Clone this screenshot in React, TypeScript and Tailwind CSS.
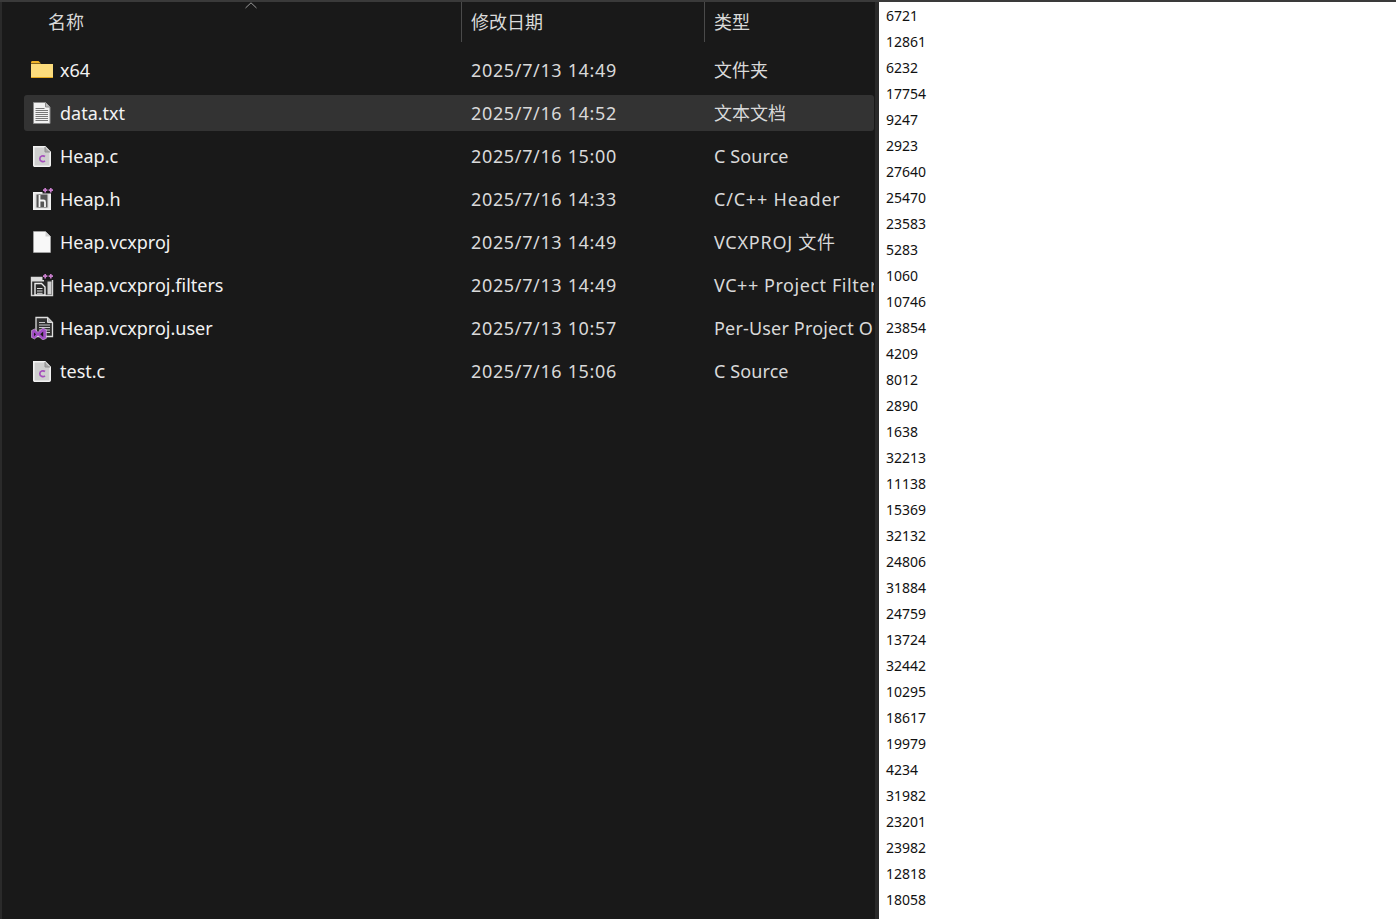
import React from "react";

const files = [
  { name: "x64", date: "2025/7/13 14:49", type: "文件夹", icon: "folder", typeClass: "" },
  { name: "data.txt", date: "2025/7/16 14:52", type: "文本文档", icon: "txt", selected: true, typeClass: "" },
  { name: "Heap.c", date: "2025/7/16 15:00", type: "C Source", icon: "c", typeClass: "tracking-[0.1px]" },
  { name: "Heap.h", date: "2025/7/16 14:33", type: "C/C++ Header", icon: "h", typeClass: "tracking-[0.8px]" },
  { name: "Heap.vcxproj", date: "2025/7/13 14:49", type: "VCXPROJ 文件", icon: "blank", typeClass: "tracking-[0.75px]" },
  { name: "Heap.vcxproj.filters", date: "2025/7/13 14:49", type: "VC++ Project Filter", icon: "filters", typeClass: "tracking-[0.55px]" },
  { name: "Heap.vcxproj.user", date: "2025/7/13 10:57", type: "Per-User Project O", icon: "user", typeClass: "tracking-[0.17px]" },
  { name: "test.c", date: "2025/7/16 15:06", type: "C Source", icon: "c", typeClass: "tracking-[0.1px]" },
];

const numbers = [
  6721, 12861, 6232, 17754, 9247, 2923, 27640, 25470, 23583, 5283, 1060, 10746, 23854, 4209, 8012, 2890, 1638,
  32213, 11138, 15369, 32132, 24806, 31884, 24759, 13724, 32442, 10295, 18617, 19979, 4234, 31982, 23201, 23982,
  12818, 18058,
];

function FileIcon({ kind }: { kind: string }) {
  if (kind === "folder") {
    return (
      <svg width="24" height="20" viewBox="0 0 24 20">
        <path d="M1 2.5C1 1.7 1.6 1 2.4 1H8.5L11 3.5H1Z" fill="#f0b429" />
        <path d="M1 4H23V18H1Z" fill="#fcdc7c" />
        <path d="M1 17H23V18H1Z" fill="#e3a81f" />
      </svg>
    );
  }
  if (kind === "txt") {
    return (
      <svg width="24" height="24" viewBox="0 0 24 24">
        <path d="M3.5 1.5H15.5L20 6V22.5H3.5Z" fill="#f2f2f2" stroke="#8c8c8c" />
        <path d="M15.5 1.5V6H20" fill="#bdbdbd" stroke="#8c8c8c" />
        <path d="M5.5 7.5H14.5M5.5 9.5H18M5.5 11.5H18M5.5 13.5H18M5.5 15.5H18M5.5 17.5H18M5.5 19.5H18" stroke="#777" strokeWidth="1" />
      </svg>
    );
  }
  if (kind === "c") {
    return (
      <svg width="24" height="24" viewBox="0 0 24 24">
        <path d="M3.8 2.8H15L20.2 8V21.2C20.2 21.8 19.8 22.2 19.2 22.2H4.8C4.2 22.2 3.8 21.8 3.8 21.2Z" fill="#cfcfcf" stroke="#f2f2f2" strokeWidth="1.6" />
        <path d="M15 3V8H20" fill="#a8a8a8" stroke="#8e8e8e" strokeWidth="1" />
        <path d="M15 12.5C13.3 11.2 9.8 11.7 9.8 14.7S13.3 18.2 15 16.9" fill="none" stroke="#a54fbc" strokeWidth="1.7" />
      </svg>
    );
  }
  if (kind === "h") {
    return (
      <svg width="24" height="24" viewBox="0 0 24 24">
        <path d="M3.8 5.8H20.2V22.2H3.8Z" fill="#dedede" stroke="#f2f2f2" strokeWidth="1.6" />
        <path d="M6.5 7.5H17.5V20.5H6.5Z" fill="#555555" />
        <path d="M9.5 8V20M9.5 13.5H13.5C14.5 13.5 15 14.2 15 15V20" fill="none" stroke="#f5f5f5" strokeWidth="1.8" />
        <path d="M12.5 0H24V6.5H12.5Z" fill="#191919" />
        <path d="M13 3.2H17.4M15.2 1V5.4M18.6 3.2H23M20.8 1V5.4" stroke="#c77dcb" strokeWidth="1.7" />
      </svg>
    );
  }
  if (kind === "blank") {
    return (
      <svg width="24" height="24" viewBox="0 0 24 24">
        <path d="M3.5 1.5H15.5L20.5 6.5V22.5H3.5Z" fill="#f8f8f8" stroke="#b0b0b0" strokeWidth="0.6" />
        <path d="M15.5 1.5V6.5H20.5Z" fill="#cfcfcf" />
      </svg>
    );
  }
  if (kind === "filters") {
    return (
      <svg width="24" height="24" viewBox="0 0 24 24">
        <path d="M1.5 4.5H22.5V22.5H1.5Z" fill="#2a2a2a" stroke="#d6d6d6" strokeWidth="1.4" />
        <path d="M1.5 4.5H14V8.5H1.5Z" fill="#dcdcdc" />
        <path d="M5 10.5H11.5L15 14V22H5Z" fill="#2a2a2a" stroke="#ededed" strokeWidth="1.4" />
        <path d="M7 15.5H12.5M7 18H12.5M7 20.3H12.5" stroke="#e0e0e0" />
        <path d="M17.5 8.5H21.5V21.5H17.5Z" fill="#d0d0d0" />
        <path d="M12.5 0H24V7H12.5Z" fill="#191919" />
        <path d="M13 3.2H17.4M15.2 1V5.4M18.6 3.2H23M20.8 1V5.4" stroke="#c77dcb" strokeWidth="1.7" />
      </svg>
    );
  }
  if (kind === "user") {
    return (
      <svg width="24" height="24" viewBox="0 0 24 24">
        <path d="M6 1.5H17.5L22.5 6.5V20.5H6Z" fill="#303030" stroke="#dedede" strokeWidth="1.3" />
        <path d="M17.5 1.5V6.5H22.5" fill="#b8b8b8" stroke="#dedede" />
        <path d="M9 6.5H15M9 9H20M9 11.5H20M9 14H20M9 16.5H20" stroke="#c8c8c8" />
        <path d="M1.5 14.5L4.6 13L8 16.3L12.8 12L16.4 13.7V22.3L12.8 24L8 19.7L4.6 23L1.5 21.5Z" fill="#a04dc4" stroke="#ecdcf3" strokeWidth="0.5" />
        <path d="M4 16.4V20.2L6 18.3ZM13.2 15.6L10.2 18.3L13.2 21Z" fill="#191919" />
      </svg>
    );
  }
  return null;
}

export default function App() {
  return (
    <div className="flex flex-col w-[1396px] h-[919px] overflow-hidden bg-[#191919] font-['Noto_Sans','Noto_Sans_CJK_SC',sans-serif]">
      <div className="h-[2px] shrink-0 bg-[#3a3a3a]" />
      <div className="flex flex-1 min-h-0">
        <div className="w-[875px] shrink-0 flex flex-col border-l-2 border-[#2a2a2a] relative">
          <div className="flex h-[40px] text-[18px] leading-[41px] text-[#d9d9d9]">
            <div className="w-[460px] pl-[46px] shrink-0 border-r border-[#4a4a4a]">名称</div>
            <div className="w-[243px] pl-[9px] shrink-0 border-r border-[#4a4a4a]">修改日期</div>
            <div className="pl-[9px]">类型</div>
          </div>
          <svg className="absolute left-[243px] top-0" width="12" height="7" viewBox="0 0 12 7">
            <path d="M0.5 6L6 0.8L11.5 6" fill="none" stroke="#9a9a9a" strokeWidth="1" />
          </svg>
          <div className="flex flex-col gap-[7px] mt-[10px]">
            {files.map((f) => (
              <div
                key={f.name}
                className={
                  f.selected
                    ? "flex items-center h-[36px] ml-[22px] mr-[1px] rounded-[3px] bg-[#333333] text-[18px] overflow-hidden"
                    : "flex items-center h-[36px] ml-[22px] mr-[1px] text-[18px] overflow-hidden"
                }
              >
                <div className="w-[415px] shrink-0 flex items-center text-[#f2f2f2]">
                  <div className="w-[36px] shrink-0 flex justify-center">
                    <FileIcon kind={f.icon} />
                  </div>
                  <span className="whitespace-nowrap">{f.name}</span>
                </div>
                <div className="w-[275px] shrink-0 pl-[32px] whitespace-nowrap tracking-[0.65px] text-[#d9d9d9]">{f.date}</div>
                <div className={"whitespace-nowrap text-[#d9d9d9] " + f.typeClass}>{f.type}</div>
              </div>
            ))}
          </div>
        </div>
        <div className="w-[4px] shrink-0 bg-[#2a2a2a]" />
        <div className="flex-1 bg-white pl-[7px] pt-[1px] text-[14px] leading-[26px] text-[#111111]">
          {numbers.map((n, i) => (
            <div key={i}>{n}</div>
          ))}
        </div>
      </div>
    </div>
  );
}
